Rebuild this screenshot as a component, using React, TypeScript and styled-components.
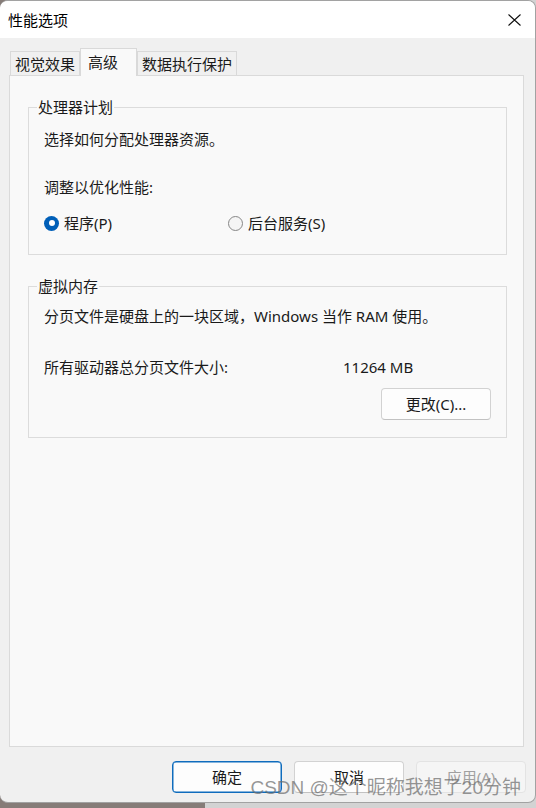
import React from "react";
import styled, { createGlobalStyle } from "styled-components";

const GlobalStyle = createGlobalStyle`
  html, body { margin: 0; padding: 0; }
  body {
    width: 536px;
    height: 808px;
    overflow: hidden;
    background: linear-gradient(to right, #867c78 0, #867c78 205px, #d3d3d3 205px);
    font-family: "Noto Sans", "Noto Sans CJK SC", sans-serif;
    color: #1a1a1a;
  }
  * { box-sizing: border-box; }
`;

const Window = styled.div`
  position: relative;
  width: 536px;
  height: 803px;
  display: flex;
  flex-direction: column;
  background: #f0f0f0;
  border: 1px solid #a2a2a2;
  border-left: none;
  border-radius: 8px;
  overflow: hidden;
`;

const TitleBar = styled.div`
  height: 37px;
  flex: none;
  display: flex;
  align-items: center;
  justify-content: space-between;
  background: #ffffff;
  padding-left: 8px;
`;

const Title = styled.span`
  font-size: 15px;
  line-height: 20px;
  color: #000;
`;

const CloseButton = styled.div`
  width: 41px;
  height: 37px;
  display: flex;
  align-items: center;
  justify-content: center;
`;

const Body = styled.div`
  flex: 1;
  display: flex;
  flex-direction: column;
  padding: 10px 0 9px 0;
`;

const TabArea = styled.div`
  flex: 1;
  display: flex;
  flex-direction: column;
  margin: 0 11px 0 9px;
`;

const TabRow = styled.div`
  height: 27px;
  flex: none;
  display: flex;
  align-items: flex-end;
  padding-left: 1px;
`;

const Tab = styled.div<{ $active?: boolean }>`
  display: flex;
  align-items: center;
  font-size: 15px;
  line-height: 20px;
  border: 1px solid #d9d9d9;
  border-bottom: none;
  white-space: nowrap;
  ${(p) =>
    p.$active
      ? `
    position: relative;
    z-index: 1;
    height: 28px;
    margin-bottom: -1px;
    padding: 0 18px 2px 7px;
    background: #f9f9f9;
  `
      : `
    height: 24px;
    padding: 0 4px;
    background: #f0f0f0;
  `}
`;

const Panel = styled.div`
  flex: 1;
  display: flex;
  flex-direction: column;
  background: #f9f9f9;
  border: 1px solid #dadada;
  padding: 21px 16px 0 18px;
`;

const GroupBox = styled.fieldset<{ $gap?: number }>`
  margin: ${(p) => p.$gap ?? 0}px 0 0 0;
  padding: 0;
  min-width: 0;
  border: 1px solid #dcdcdc;
`;

const GroupLegend = styled.legend`
  margin-left: 8px;
  padding: 0 1px;
  font-size: 15px;
  line-height: 20px;
`;

const GroupBody = styled.div<{ $top: number; $bottom: number }>`
  padding: ${(p) => p.$top}px 15px ${(p) => p.$bottom}px 15px;
  display: flex;
  flex-direction: column;
`;

const Line = styled.div<{ $gap?: number }>`
  margin-top: ${(p) => p.$gap ?? 0}px;
  font-size: 15px;
  line-height: 20px;
  white-space: nowrap;
`;

const RadioRow = styled.div`
  margin-top: 16px;
  display: grid;
  grid-template-columns: 184px auto;
  height: 20px;
`;

const RadioLabel = styled.label`
  display: flex;
  align-items: center;
  gap: 5px;
  font-size: 15px;
  line-height: 20px;
`;

const RadioDot = styled.span<{ $checked?: boolean }>`
  width: 15px;
  height: 15px;
  border-radius: 50%;
  display: grid;
  place-items: center;
  ${(p) =>
    p.$checked
      ? `
    background: #005fb8;
    &::after {
      content: "";
      width: 6px;
      height: 6px;
      border-radius: 50%;
      background: #ffffff;
    }
  `
      : `
    background: #f5f5f5;
    border: 1px solid #878787;
  `}
`;

const SizeRow = styled.div`
  margin-top: 31px;
  display: grid;
  grid-template-columns: 299px auto;
  font-size: 15px;
  line-height: 20px;
`;

const RightRow = styled.div`
  margin-top: 11px;
  display: flex;
  justify-content: flex-end;
`;

const Button = styled.button<{ $variant?: "default" | "disabled" }>`
  width: 110px;
  height: 32px;
  border-radius: 4px;
  font-family: inherit;
  font-size: 15px;
  line-height: 20px;
  padding: 0;
  display: flex;
  align-items: center;
  justify-content: center;
  background: #fdfdfd;
  color: #1a1a1a;
  border: 1px solid #d2d2d2;
  border-bottom-color: #c2c2c2;
  ${(p) =>
    p.$variant === "default"
      ? `
    border: 1px solid #0f6cbd;
    box-shadow: inset 0 0 0 0.5px #0f6cbd;
  `
      : ""}
  ${(p) =>
    p.$variant === "disabled"
      ? `
    background: #f5f5f5;
    border: 1px solid #e3e3e3;
    color: #a0a0a0;
  `
      : ""}
`;

const ButtonRow = styled.div`
  margin-top: 14px;
  height: 32px;
  flex: none;
  display: flex;
  justify-content: flex-end;
  gap: 12px;
  padding-right: 9px;
`;

const Watermark = styled.div`
  position: absolute;
  right: 14px;
  bottom: 3px;
  font-family: "Liberation Sans", "Noto Sans CJK SC", sans-serif;
  font-size: 19px;
  line-height: 22px;
  color: rgba(110, 110, 110, 0.72);
  white-space: nowrap;
  pointer-events: none;
`;

export default function App() {
  return (
    <>
      <GlobalStyle />
      <Window>
        <TitleBar>
          <Title>性能选项</Title>
          <CloseButton>
            <svg width="13" height="12" viewBox="0 0 13 12">
              <path d="M0.5 0.5 L12.5 11.5 M12.5 0.5 L0.5 11.5" stroke="#111" strokeWidth="1.1" fill="none" />
            </svg>
          </CloseButton>
        </TitleBar>
        <Body>
          <TabArea>
            <TabRow>
              <Tab>视觉效果</Tab>
              <Tab $active>高级</Tab>
              <Tab>数据执行保护</Tab>
            </TabRow>
            <Panel>
              <GroupBox>
                <GroupLegend>处理器计划</GroupLegend>
                <GroupBody $top={12} $bottom={21}>
                  <Line>选择如何分配处理器资源。</Line>
                  <Line $gap={28}>调整以优化性能:</Line>
                  <RadioRow>
                    <RadioLabel>
                      <RadioDot $checked />
                      程序(P)
                    </RadioLabel>
                    <RadioLabel>
                      <RadioDot />
                      后台服务(S)
                    </RadioLabel>
                  </RadioRow>
                </GroupBody>
              </GroupBox>
              <GroupBox $gap={21}>
                <GroupLegend>虚拟内存</GroupLegend>
                <GroupBody $top={10} $bottom={17}>
                  <Line>分页文件是硬盘上的一块区域，Windows 当作 RAM 使用。</Line>
                  <SizeRow>
                    <span>所有驱动器总分页文件大小:</span>
                    <span>11264 MB</span>
                  </SizeRow>
                  <RightRow>
                    <Button>更改(C)...</Button>
                  </RightRow>
                </GroupBody>
              </GroupBox>
            </Panel>
          </TabArea>
          <ButtonRow>
            <Button $variant="default">确定</Button>
            <Button>取消</Button>
            <Button $variant="disabled">应用(A)</Button>
          </ButtonRow>
        </Body>
        <Watermark>CSDN @这个昵称我想了20分钟</Watermark>
      </Window>
    </>
  );
}
